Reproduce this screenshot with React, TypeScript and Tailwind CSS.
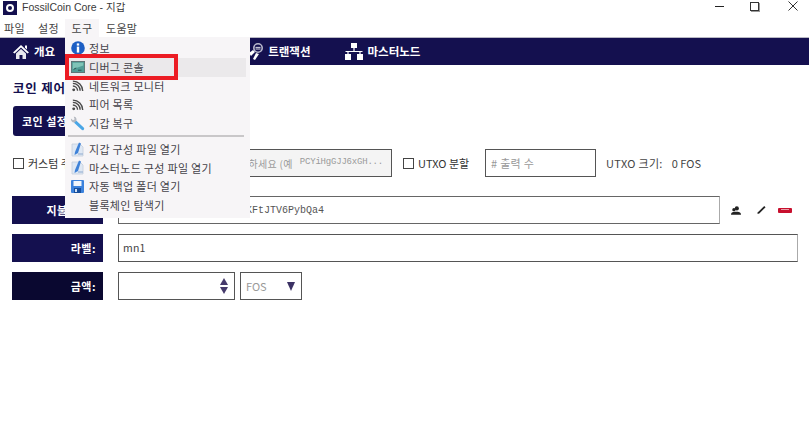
const font = { fontFamily: '"Noto Sans CJK KR", "Liberation Sans", sans-serif' };

function HomeIcon() {
  return (
    <svg width="16" height="16" viewBox="0 0 16 16" className="shrink-0">
      <path d="M8 1 L16 8.5 L14.4 9.6 L8 3.6 L1.6 9.6 L0 8.5 Z" fill="#fff" />
      <path d="M12 1.6h2v4l-2-1.8z" fill="#fff" />
      <path d="M3 9.6 L8 5 L13 9.6 V15 H9.5 V11 H6.5 V15 H3 Z" fill="#e8e8ee" />
    </svg>
  );
}

function TxIcon() {
  return (
    <svg width="14" height="18" viewBox="0 0 14 18" className="shrink-0">
      <circle cx="9" cy="5" r="4.2" fill="none" stroke="#b9b8cc" strokeWidth="1.6" />
      <path d="M6.5 4.4h5M6.5 6h5" stroke="#d8d8e4" strokeWidth="1" />
      <path d="M0 10 L4 7 L6 9 L2 13 Z" fill="#fff" />
      <path d="M7 10 L10 11 L6 17 L4 16 Z" fill="#fff" />
    </svg>
  );
}

function NodeIcon() {
  return (
    <svg width="18" height="17" viewBox="0 0 18 17" className="shrink-0">
      <rect x="6" y="0" width="6" height="5" fill="#fff" />
      <rect x="0" y="11" width="6" height="6" fill="#fff" />
      <rect x="12" y="11" width="6" height="6" fill="#fff" />
      <path d="M9 5v3M0.5 8.5h17M3 8.5V11M15 8.5V11" stroke="#fff" strokeWidth="1.2" fill="none" />
    </svg>
  );
}

function InfoIcon() {
  return (
    <svg width="14" height="14" viewBox="0 0 14 14">
      <circle cx="7" cy="7" r="6.8" fill="#1d5fc4" />
      <rect x="5.8" y="2.4" width="2.4" height="2.2" fill="#fff" />
      <rect x="5.8" y="5.6" width="2.4" height="6" fill="#fff" />
    </svg>
  );
}

function ConsoleIcon() {
  return (
    <svg width="14" height="12" viewBox="0 0 16 13" preserveAspectRatio="none">
      <rect x="0.5" y="0.5" width="15" height="12" fill="#4f9c96" stroke="#5b6f72" />
      <path d="M2 2h12v3L2 9z" fill="#7fc4b8" />
      <path d="M3 9l3-1.5M8 10h4" stroke="#27494a" strokeWidth="1" />
    </svg>
  );
}

function SignalIcon() {
  return (
    <svg width="12" height="12" viewBox="0 0 14 13" fill="none" stroke="#4a4a4a" strokeWidth="1.6">
      <circle cx="2" cy="11" r="1.7" fill="#4a4a4a" stroke="none" />
      <path d="M1 6.5a5.5 5.5 0 0 1 5.5 5.5" />
      <path d="M1 3.5a8.5 8.5 0 0 1 8.5 8.5" />
      <path d="M1 .8a11.5 11.5 0 0 1 11.5 11.5" />
    </svg>
  );
}

function WrenchIcon() {
  return (
    <svg width="15" height="15" viewBox="0 0 16 16">
      <path d="M6 6.5 L13.5 13.5" stroke="#4aa6e6" strokeWidth="3.2" strokeLinecap="round" />
      <path d="M1 2.6 L3.2 4.6 L5 3.4 L4 0.8 C6 0.4 7.6 2.4 6.8 5 L5 6.8 C2.6 7.4 0.6 5 1 2.6 Z" fill="#b4b8c0" />
    </svg>
  );
}

function DocIcon() {
  return (
    <svg width="14" height="15" viewBox="0 0 14 15">
      <path d="M1 2h8l3 3v9H1z" fill="#dfe8f4" stroke="#c4cedc" strokeWidth="0.8" />
      <path d="M8 0.5 L10 1.5 L7 11 L3.5 13 L4 10 Z" fill="#3f82d8" />
      <path d="M7 12h5" stroke="#9db4d4" strokeWidth="1.2" />
    </svg>
  );
}

function SaveIcon() {
  return (
    <svg width="13" height="13" viewBox="0 0 13 13">
      <rect width="13" height="13" rx="1" fill="#3c82dc" />
      <rect x="2.5" y="1" width="8" height="5" fill="#f2f6fc" />
      <rect x="3" y="8" width="7" height="5" fill="#174f9e" />
      <rect x="4" y="9" width="2" height="3" fill="#cfe0f6" />
    </svg>
  );
}

const menuItems = [
  { label: '정보', icon: <InfoIcon /> },
  { label: '디버그 콘솔', icon: <ConsoleIcon />, active: true },
  { label: '네트워크 모니터', icon: <SignalIcon /> },
  { label: '피어 목록', icon: <SignalIcon /> },
  { label: '지갑 복구', icon: <WrenchIcon />, sep: true },
  { label: '지갑 구성 파일 열기', icon: <DocIcon /> },
  { label: '마스터노드 구성 파일 열기', icon: <DocIcon /> },
  { label: '자동 백업 폴더 열기', icon: <SaveIcon /> },
  { label: '블록체인 탐색기', icon: null },
];

function ToolsMenu() {
  return (
    <div className="absolute left-[65px] top-[37px] z-20 h-[181px] w-[185px] bg-[#f7f5f7] pl-[1px] pt-[2px] pr-[4px] text-[11px] tracking-[0.3px] text-[#45434a]">
      {menuItems.map((item) => (
        <div key={item.label}>
          <div className={`flex h-[18.75px] items-center ${item.active ? 'bg-[#ebe9eb]' : ''}`}>
            <span className="flex w-[23px] shrink-0 justify-center">{item.icon}</span>
            <span>{item.label}</span>
          </div>
          {item.sep && <div className="mx-[2px] mb-[3px] mt-[2px] h-[2px] bg-[#c9c7c9]" />}
        </div>
      ))}
      <div className="absolute left-0 top-[17px] h-[26px] w-[113px] border-[4px] border-[#ec1c24]" />
    </div>
  );
}

function Label({ text, dark }: { text: string; dark?: boolean }) {
  return (
    <div className={`flex h-[28px] w-[91px] shrink-0 items-center justify-end pr-[7px] text-[11px] font-bold tracking-[0.5px] text-white ${dark ? 'bg-[#0a0830]' : 'bg-[#14104f]'}`}>
      {text}
    </div>
  );
}

export default function App() {
  return (
    <div style={font} className="relative h-[422px] w-[809px] overflow-hidden bg-white text-[#333]">
      {/* 타이틀바 */}
      <div className="flex h-[19px] items-center">
        <div className="ml-[3px] mt-[-3px] flex size-[14px] items-center justify-center bg-[#14104f]">
          <div className="size-[8px] rounded-full border-[2px] border-white bg-[#14104f]" />
        </div>
        <span className="ml-[5px] mt-[-3px] font-['Liberation_Sans','Noto_Sans_CJK_KR',sans-serif] text-[10.5px] text-[#3a3a3a]">FossilCoin Core - 지갑</span>
        <div className="ml-auto mt-[-7px] flex items-center">
          <div className="mr-[26px] h-[1px] w-[9px] bg-[#222]" />
          <div className="mr-[29px] size-[9px] border border-[#333] shadow-[1px_1px_0_#999]" />
          <svg width="10" height="10" viewBox="0 0 10 10" className="mr-[11px]">
            <path d="M.5.5l9 9M9.5.5l-9 9" stroke="#333" strokeWidth="1" />
          </svg>
        </div>
      </div>

      {/* 메뉴바 */}
      <div className="flex h-[18px] items-center text-[11px] tracking-[0.3px] text-[#444]">
        <span className="w-[38px] pl-[4px]">파일</span>
        <span className="w-[27px]">설정</span>
        <span className="flex h-full w-[34px] items-center justify-center bg-[#f7f5f7]">도구</span>
        <span className="pl-[7px]">도움말</span>
      </div>

      {/* 네비게이션 */}
      <div className="flex h-[28px] items-center border-t border-[#b9b9c4] bg-[#14104f] pl-[13px] text-[11.5px] font-bold text-white">
        <HomeIcon />
        <span className="ml-[5px]">개요</span>
        <div className="ml-[194px] flex items-center gap-[5px]">
          <TxIcon />
          <span>트랜잭션</span>
        </div>
        <div className="ml-[34px] flex items-center gap-[5px]">
          <NodeIcon />
          <span>마스터노드</span>
        </div>
      </div>

      <div className="pl-[13px]">
        <h1 className="mt-[13px] h-[19px] text-[12.5px] font-bold leading-[19px] tracking-[0.8px] text-[#14104f]">코인 제어 기능</h1>
        <button className="mt-[9px] block h-[30px] w-[120px] rounded-[3px] bg-[#14104f] pl-[9px] text-left text-[11px] font-bold tracking-[0.5px] text-white">
          코인 설정...
        </button>

        {/* 커스텀 주소 + UTXO */}
        <div className="mt-[13px] flex h-[28px] items-center text-[11px] text-[#333]">
          <div className="size-[11px] shrink-0 border border-[#444] bg-white" />
          <span className="ml-[4px] w-[95px]">커스텀 주소:</span>
          <div className="flex h-[28px] w-[269px] items-center justify-end border border-[#555] bg-[#f4f4f4] pr-[8px] text-[10px] tracking-[0.3px] text-[#9a9a9a]">
            <span>주소를 입력하세요 (예</span>
            <span className="ml-[7px] font-['Liberation_Mono',monospace] text-[9px] tracking-[-0.2px]">PCYiHgGJJ6xGH...</span>
          </div>
          <div className="ml-[11px] size-[11px] shrink-0 border border-[#444] bg-white" />
          <span className="ml-[4px] w-[67px]">UTXO 분할</span>
          <div className="flex h-[28px] w-[111px] items-center border border-[#555] pl-[5px] tracking-[0.3px] text-[#999]"># 출력 수</div>
          <span className="ml-[10px] tracking-[0.3px] text-[#444]">UTXO 크기:</span>
          <span className="ml-[9px] text-[#444]">0 FOS</span>
        </div>

        {/* 지불 대상 */}
        <div className="mt-[19px] flex items-center">
          <div className="-ml-[1px]"><Label text="지불 대상:" /></div>
          <div className="ml-[15px] flex h-[28px] w-[602px] items-center border border-[#666] border-r-[#aaa] bg-white pl-[5px] font-['Liberation_Mono',monospace] text-[10px] text-[#555]">
            <span className="ml-[122px]">KFtJTV6PybQa4</span>
          </div>
          <svg width="10" height="9" viewBox="0 0 12 10" className="ml-[11px]">
            <circle cx="7" cy="2.5" r="2.5" fill="#222" />
            <circle cx="3.5" cy="4" r="2" fill="#222" />
            <path d="M0 10c0-2.5 2-3.5 4-3.5h4c2 0 4 1 4 3.5z" fill="#222" />
          </svg>
          <svg width="9" height="10" viewBox="0 0 10 10" className="ml-[16px]">
            <path d="M8 0.5 L9.5 2 L2.5 9 L0.5 9.5 L1 7.5 Z" fill="#222" />
          </svg>
          <svg width="14" height="5" viewBox="0 0 14 5" className="ml-[12px]">
            <rect width="14" height="5" rx="1" fill="#c8102e" />
            <rect x="3" y="1" width="8" height="1" fill="#e8a0a8" />
          </svg>
        </div>

        {/* 라벨 */}
        <div className="mt-[10px] flex items-center">
          <div className="-ml-[1px]"><Label text="라벨:" /></div>
          <div className="ml-[15px] flex h-[28px] w-[680px] items-center border border-[#555] border-r-[#aaa] bg-white pl-[4px] text-[10.5px] tracking-[0.2px] text-[#444]">mn1</div>
        </div>

        {/* 금액 */}
        <div className="mt-[10px] flex items-center">
          <div className="-ml-[1px]"><Label text="금액:" dark /></div>
          <div className="ml-[15px] flex h-[28px] w-[117px] items-center justify-end border border-[#555] bg-white pr-[6px]">
            <div className="flex flex-col gap-[2px]">
              <div className="h-0 w-0 border-x-[4px] border-b-[7px] border-x-transparent border-b-[#453a6b]" />
              <div className="h-0 w-0 border-x-[4px] border-t-[7px] border-x-transparent border-t-[#453a6b]" />
            </div>
          </div>
          <div className="ml-[5px] flex h-[28px] w-[62px] items-center justify-between border border-[#555] pl-[5px] pr-[6px] text-[11px] text-[#999]">
            FOS
            <div className="h-0 w-0 border-x-[4px] border-t-[9px] border-x-transparent border-t-[#3b3164]" />
          </div>
        </div>
      </div>

      <ToolsMenu />
    </div>
  );
}
